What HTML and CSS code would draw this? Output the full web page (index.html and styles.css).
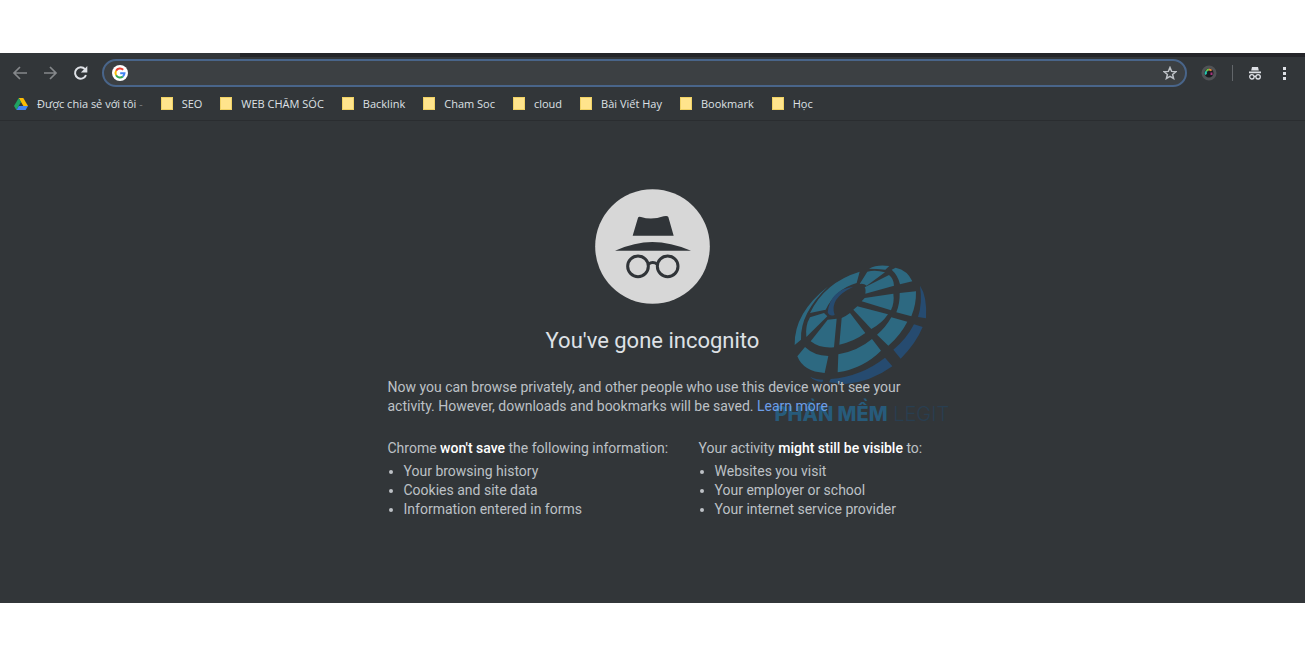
FILE: index.html
```html
<!DOCTYPE html>
<html lang="vi">
<head>
    <meta charset="UTF-8">
    <meta name="viewport" content="width=device-width, initial-scale=1.0">
    <title>Incognito</title>
    <link rel="stylesheet" href="styles.css">
</head>
<body>
    <div class="browser">
        <!-- START TOOLBAR -->
        <div class="tab-strip"></div>
        <div class="toolbar">
            <button class="nav-btn dim" aria-label="Back">
                <svg width="16" height="16" viewBox="0 0 16 16"><path d="M15 8H2.500M8 2L2 8l6 6" fill="none" stroke="currentColor" stroke-width="1.700"/></svg>
            </button>
            <button class="nav-btn dim" aria-label="Forward">
                <svg width="16" height="16" viewBox="0 0 16 16"><path d="M2 8h11.500M8 2l6 6-6 6" fill="none" stroke="currentColor" stroke-width="1.700"/></svg>
            </button>
            <button class="nav-btn" aria-label="Reload">
                <svg width="16" height="16" viewBox="0 0 16 16"><path d="M14 10.200A5.700 5.700 0 1 1 13 4.200" fill="none" stroke="currentColor" stroke-width="2"/><path d="M15.300 1v6.500H8.800z" fill="currentColor"/></svg>
            </button>
            <div class="omnibox">
                <svg width="16" height="16" viewBox="0 0 16 16">
                    <circle cx="8" cy="8" r="8" fill="#fff"/>
                    <g fill="none" stroke-width="2">
                        <path d="M11.200 4.800A4.500 4.500 0 0 0 4.100 5.750" stroke="#ea4335"/>
                        <path d="M4.100 5.750A4.500 4.500 0 0 0 4.100 10.250" stroke="#fbbc05"/>
                        <path d="M4.100 10.250A4.500 4.500 0 0 0 10.900 11.450" stroke="#34a853"/>
                        <path d="M10.900 11.450A4.500 4.500 0 0 0 12.500 8.300H8.200" stroke="#4285f4"/>
                    </g>
                </svg>
                <input type="text" id="address" aria-label="Address">
                <button class="star" aria-label="Bookmark this page">
                    <svg width="14" height="14" viewBox="0 0 14 14"><path d="M7 1.500l1.600 3.900 4.200.300-3.200 2.700 1 4.100L7 10.300l-3.600 2.200 1-4.100L1.200 5.700l4.200-.300z" fill="none" stroke="currentColor" stroke-width="1.500"/></svg>
                </button>
            </div>
            <div class="tools">
                <button class="tool" aria-label="Color picker">
                    <svg width="16" height="16" viewBox="0 0 16 16">
                        <circle cx="8" cy="8" r="6" fill="#1b1c20" stroke="#505356" stroke-width="3"/>
                        <g fill="none" stroke-width="2">
                            <path d="M5 9.500A3.500 3.500 0 0 1 5.500 6" stroke="#26c6b0"/>
                            <path d="M5.500 6a3.500 3.500 0 0 1 2.500-1.500" stroke="#6fc04a"/>
                            <path d="M8 4.500a3.500 3.500 0 0 1 2.500 1.200" stroke="#e08a3c"/>
                            <path d="M10.500 7.500v2.500" stroke="#a8327e"/>
                        </g>
                    </svg>
                </button>
                <span class="separator"></span>
                <svg class="mini-spy" width="14" height="14" viewBox="0 0 14 14">
                    <path d="M4 1h6l.800 3.500H3.200zM1 5.500h12v1.700H1z" fill="currentColor"/>
                    <g fill="none" stroke="currentColor" stroke-width="1.300"><circle cx="3.900" cy="10.800" r="2.200"/><circle cx="10.100" cy="10.800" r="2.200"/><path d="M6 10.300h2"/></g>
                </svg>
                <button class="tool menu" aria-label="Menu">
                    <svg width="4" height="14" viewBox="0 0 4 14"><path d="M0 1h3v3H0zM0 6h3v3H0zM0 11h3v3H0z" fill="currentColor"/></svg>
                </button>
            </div>
        </div>
        <!-- END TOOLBAR -->

        <!-- START BOOKMARKS -->
        <nav class="bookmarks">
            <a href="#" class="drive">
                <svg width="14" height="12" viewBox="0 0 14 12"><path d="M4.700 0h4.600L14 8H9.400z" fill="#fbbc05"/><path d="M4.700 0L7 4 2.400 12 0 8z" fill="#1fa463"/><path d="M4.800 8H14l-2.400 4H2.400z" fill="#4285f4"/></svg>
                <span>Được chia sẻ với tôi <i>-</i></span>
            </a>
            <a href="#"><b class="folder"></b>SEO</a>
            <a href="#"><b class="folder"></b>WEB CHĂM SÓC</a>
            <a href="#"><b class="folder"></b>Backlink</a>
            <a href="#"><b class="folder"></b>Cham Soc</a>
            <a href="#"><b class="folder"></b>cloud</a>
            <a href="#"><b class="folder"></b>Bài Viết Hay</a>
            <a href="#"><b class="folder"></b>Bookmark</a>
            <a href="#"><b class="folder"></b>Học</a>
        </nav>
        <!-- END BOOKMARKS -->

        <!-- START INCOGNITO CONTENT -->
        <main class="content">
            <svg class="spy" width="115" height="115" viewBox="0 0 345 345">
                <circle cx="172.500" cy="172.500" r="172" fill="#d7d7d7"/>
                <g fill="#303438">
                    <path d="M129 86Q131 81 138 84Q170 94 206 82Q217 79 220 84L236 140H113z"/>
                    <path d="M60 185Q120 159 172 159Q226 159 288 185z"/>
                </g>
                <g fill="none" stroke="#303438" stroke-width="9">
                    <circle cx="129" cy="232" r="31"/>
                    <circle cx="218" cy="232" r="31"/>
                    <path d="M160 226Q173 215 187 226"/>
                </g>
            </svg>
            <h1>You've gone incognito</h1>
            <p>Now you can browse privately, and other people who use this device won't see your activity. However, downloads and bookmarks will be saved. <a href="#">Learn more</a></p>
            <div class="columns">
                <section>
                    <h2>Chrome <strong>won't save</strong> the following information:</h2>
                    <ul>
                        <li>Your browsing history</li>
                        <li>Cookies and site data</li>
                        <li>Information entered in forms</li>
                    </ul>
                </section>
                <section>
                    <h2>Your activity <strong>might still be visible</strong> to:</h2>
                    <ul>
                        <li>Websites you visit</li>
                        <li>Your employer or school</li>
                        <li>Your internet service provider</li>
                    </ul>
                </section>
            </div>

            <!-- watermark behind the text -->
            <div class="watermark">
                <svg width="134" height="122" viewBox="100 40 402 366">
                    <g fill="#2d6981">
                        <path d="M297 66L288 100Q225 118 195 180L148 190Q192 98 297 66z"/>
                        <path d="M203 110Q100 190 102 286L121 270Q118 190 203 110z"/>
                        <path d="M325 57Q350 43 386 49L374 60Q348 57 325 57z"/>
                        <path d="M297 103L320 66Q345 60 373 68L318 108Q310 101 297 103z"/>
                        <path d="M385 76Q399 86 400 108L314 132Q316 118 312 113z"/>
                        <path d="M393 60L405 54Q441 62 455 95L418 104Q412 77 393 60z"/>
                        <path d="M398 132Q402 158 391 182L303 155L312 145z"/>
                        <path d="M417 130L466 125Q467 165 452 200L407 188Q418 160 417 130z"/>
                        <path d="M290 170L382 194Q364 221 332 238L278 180z"/>
                        <path d="M392 203L440 216Q420 256 383 288L349 255Q374 235 392 203z"/>
                        <path d="M243 205Q255 200 268 190L314 250Q281 275 236 285z"/>
                        <path d="M334 268L361 303Q308 356 231 368L233 314Q291 304 334 268z"/>
                        <path d="M201 210L228 207L220 293Q178 297 150 275z"/>
                        <path d="M133 292Q160 318 203 319L192 370Q128 366 110 320z"/>
                        <path d="M148 203L190 190L200 200L137 262Q133 228 148 203z"/>
                    </g>
                    <g fill="#264b70">
                        <path d="M278 111Q208 121 201 188Q207 202 222 196Q204 146 278 111z"/>
                        <path d="M478 108Q500 140 496 206L472 202Q486 160 478 108z"/>
                        <path d="M460 224L486 232Q466 281 420 327L398 300Q436 270 460 224z"/>
                        <path d="M373 324L395 350Q330 397 255 403L205 398L210 388Q302 380 373 324z"/>
                        <path d="M148 381Q165 390 188 390L185 398Q160 394 148 381z"/>
                    </g>
                </svg>
                <div class="brand"><b>PHẦN MỀM</b> <span>LEGIT</span></div>
            </div>
        </main>
        <!-- END INCOGNITO CONTENT -->
    </div>
</body>
</html>
```

FILE: styles.css
```css
* {
    box-sizing: border-box;
}

body {
    margin: 0;
    padding: 53px 0;
    background-color: #fff;
    font-family: Roboto, "Liberation Sans", sans-serif;
}

button {
    display: flex;
    padding: 0;
    border: none;
    background: none;
    color: inherit;
    cursor: pointer;
}

.browser {
    min-height: 550px;
    background-color: #323639;
    color: #dee1e6;
}

.tab-strip {
    height: 4px;
    margin-left: 240px;
    background-color: #242529;
}

/* toolbar */
.toolbar {
    display: flex;
    align-items: center;
    gap: 14px;
    padding: 2px 18px 0 12px;
}

.nav-btn {
    width: 16px;
}

.dim {
    color: #85888b;
}

.omnibox {
    display: flex;
    flex: 1;
    align-items: center;
    height: 28px;
    padding: 0 8px;
    border: 2px solid #49658a;
    border-radius: 14px;
    background-color: #3c4043;
}

.omnibox input {
    flex: 1;
    min-width: 0;
    border: none;
    outline: none;
    background: none;
    color: #fff;
}

.star {
    color: #bdc1c6;
}

.tools {
    display: flex;
    align-items: center;
    gap: 15px;
}

.menu {
    margin-left: 6px;
}

.separator {
    width: 1px;
    height: 16px;
    background-color: #62666a;
}

/* bookmarks bar */
.bookmarks {
    display: flex;
    align-items: center;
    gap: 18px;
    height: 34px;
    padding: 0 14px;
    border-bottom: 1px solid #2a2d30;
    font-family: "Open Sans", "Noto Sans", sans-serif;
    font-size: 11px;
    white-space: nowrap;
}

.bookmarks a {
    display: flex;
    align-items: center;
    gap: 9px;
    color: #dee1e6;
    text-decoration: none;
}

.bookmarks i {
    color: #6f7376;
}

.folder {
    width: 12px;
    height: 13px;
    border: 1px solid #f0d264;
    background-color: #ffe48c;
}

/* incognito page */
.content {
    position: relative;
    z-index: 0;
    width: 530px;
    max-width: 100%;
    margin: 0 auto;
    padding-top: 68px;
    font-size: 14px;
    line-height: 19px;
    color: #bdc1c6;
}

.spy {
    display: block;
    margin: 0 auto;
}

.content h1 {
    margin: 22px 0;
    color: #dee1e6;
    font-size: 22px;
    font-weight: 400;
    line-height: 30px;
    text-align: center;
}

.content p {
    margin: 0 0 23px;
}

.content p a {
    color: #6d9ee8;
    text-decoration: none;
}

.columns {
    display: grid;
    grid-template-columns: 280px 1fr;
    gap: 31px;
}

.columns h2 {
    margin: 0 0 4px;
    font-size: 14px;
    font-weight: 400;
    white-space: nowrap;
}

.columns strong {
    color: #fff;
    font-weight: 500;
}

.columns ul {
    margin: 0;
    padding-left: 16px;
}

.watermark {
    position: absolute;
    z-index: -1;
    top: 142px;
    left: 387px;
    width: 180px;
}

.watermark svg {
    display: block;
    margin-left: 19px;
}

.brand {
    margin-top: 17px;
    color: #275b7b;
    font-family: Inter, sans-serif;
    font-size: 20px;
    line-height: 24px;
    white-space: nowrap;
}

.brand b {
    font-weight: 800;
}

.brand span {
    color: #293e50;
    font-weight: 300;
}
```
